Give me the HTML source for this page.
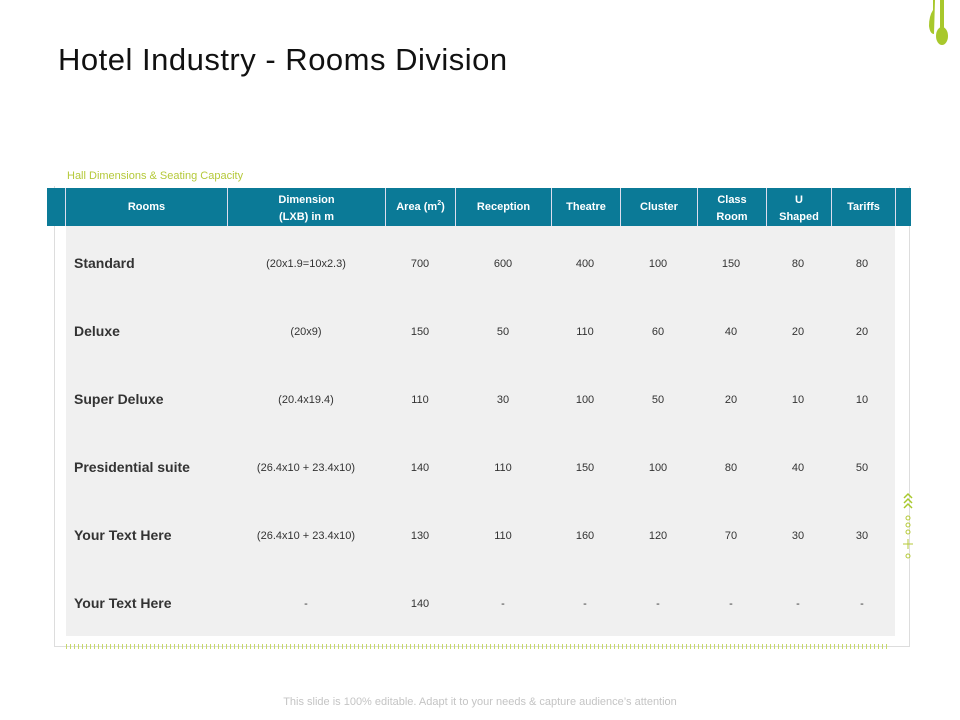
<!DOCTYPE html>
<html><head><meta charset="utf-8"><style>
body{margin:0;width:960px;height:720px;background:#fff;position:relative;font-family:"Liberation Sans",sans-serif;overflow:hidden}
.a{position:absolute}
h1{position:absolute;left:58px;top:42px;margin:0;font-size:31px;font-weight:normal;color:#111;letter-spacing:0.5px}
.hd{position:absolute;top:188px;height:38px;color:#fff;font-size:11px;font-weight:bold;display:flex;align-items:center;justify-content:center;text-align:center;line-height:17px}
.c{position:absolute;font-size:11px;color:#333;text-align:center;transform:translate(-50%,-50%)}
.r{position:absolute;left:74px;font-size:14px;font-weight:bold;color:#333;transform:translateY(-50%)}
</style></head><body>
<h1>Hotel Industry - Rooms Division</h1>
<svg class="a" style="left:920px;top:0" width="40" height="50"><path d="M13 0 L13 10 Q9 16 9 26 Q10 34 14 34 L15 0Z" fill="#a8c82c"/><rect x="20" y="0" width="4" height="28" fill="#a8c82c"/><ellipse cx="22" cy="36" rx="6" ry="9" fill="#a8c82c"/></svg>
<div class="a" style="left:67px;top:170px;font-size:11px;color:#b5c93a">Hall Dimensions &amp; Seating Capacity</div>
<div class="a" style="left:54px;top:186px;width:854px;height:460px;border:1px solid #ddd;border-top:none"></div>
<div class="a" style="left:47px;top:188px;width:864px;height:38px;background:#0b7a97"></div>
<div class="a" style="left:66px;top:226px;width:829px;height:410px;background:#f0f0f0"></div>
<div class="a" style="left:66px;top:644px;width:822px;height:5px;background:repeating-linear-gradient(90deg,#c7d86a 0 1px,transparent 1px 4px)"></div>
<svg class="a" style="left:900px;top:492px" width="16" height="70"><g fill="none" stroke="#a8c82c" stroke-width="1.5"><path d="M4 6l4-4 4 4M4 11l4-4 4 4M4 16l4-4 4 4"/></g><g fill="none" stroke="#b5c93a"><circle cx="8" cy="26" r="2"/><circle cx="8" cy="33" r="2"/><circle cx="8" cy="40" r="2"/><path d="M8 47v10M3 52h10"/><circle cx="8" cy="64" r="2"/></g></svg>
<div class="a" style="left:0;top:0">
<div class="a" style="left:65px;top:188px;width:1px;height:38px;background:#dde"></div>
<div class="a" style="left:227px;top:188px;width:1px;height:38px;background:#dde"></div>
<div class="a" style="left:385px;top:188px;width:1px;height:38px;background:#dde"></div>
<div class="a" style="left:455px;top:188px;width:1px;height:38px;background:#dde"></div>
<div class="a" style="left:551px;top:188px;width:1px;height:38px;background:#dde"></div>
<div class="a" style="left:620px;top:188px;width:1px;height:38px;background:#dde"></div>
<div class="a" style="left:697px;top:188px;width:1px;height:38px;background:#dde"></div>
<div class="a" style="left:766px;top:188px;width:1px;height:38px;background:#dde"></div>
<div class="a" style="left:831px;top:188px;width:1px;height:38px;background:#dde"></div>
<div class="a" style="left:895px;top:188px;width:1px;height:38px;background:#dde"></div>
</div>
<div class="hd" style="left:66px;width:161px">Rooms</div>
<div class="hd" style="left:228px;width:157px;padding-top:3px;height:35px">Dimension<br>(LXB) in m</div>
<div class="hd" style="left:386px;width:69px">Area (m<span style="font-size:7px;position:relative;top:-4px">2</span>)</div>
<div class="hd" style="left:456px;width:95px">Reception</div>
<div class="hd" style="left:552px;width:68px">Theatre</div>
<div class="hd" style="left:621px;width:76px">Cluster</div>
<div class="hd" style="left:698px;width:68px;padding-top:3px;height:35px">Class<br>Room</div>
<div class="hd" style="left:767px;width:64px;padding-top:3px;height:35px">U<br>Shaped</div>
<div class="hd" style="left:832px;width:63px">Tariffs</div>
<div id="rows"></div>
<script>
var d=[["Standard","(20x1.9=10x2.3)","700","600","400","100","150","80","80"],
["Deluxe","(20x9)","150","50","110","60","40","20","20"],
["Super Deluxe","(20.4x19.4)","110","30","100","50","20","10","10"],
["Presidential suite","(26.4x10 + 23.4x10)","140","110","150","100","80","40","50"],
["Your Text Here","(26.4x10 + 23.4x10)","130","110","160","120","70","30","30"],
["Your Text Here","-","140","-","-","-","-","-","-"]];
var xs=[306,420,503,585,658,731,798,862],h="";
d.forEach(function(r,i){var y=263+i*68;h+='<div class="r" style="top:'+y+'px">'+r[0]+'</div>';
for(var j=1;j<9;j++)h+='<div class="c" style="left:'+xs[j-1]+'px;top:'+(y+1)+'px">'+r[j]+'</div>';});
document.getElementById("rows").innerHTML=h;
</script>
<div class="a" style="left:0;width:960px;top:696px;text-align:center;font-size:11px;color:#c4c4c4">This slide is 100% editable. Adapt it to your needs &amp; capture audience’s attention</div>
</body></html>
